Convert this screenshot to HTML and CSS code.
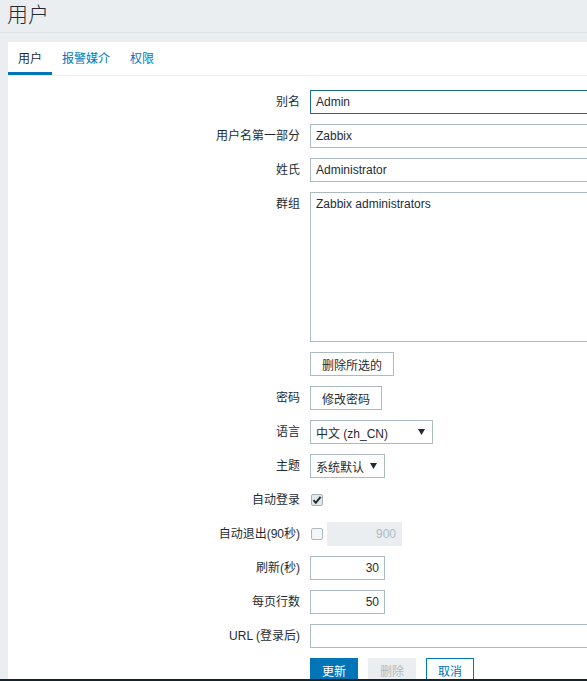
FILE: index.html
```html
<!DOCTYPE html>
<html lang="zh-CN">
<head>
<meta charset="utf-8">
<title>用户</title>
<link rel="stylesheet" href="styles.css">
</head>
<body>
<header class="page-header">
  <h1 class="page-title">用户</h1>
</header>

<main class="panel">
  <nav class="tabs">
    <a class="tab active">用户</a>
    <a class="tab">报警媒介</a>
    <a class="tab">权限</a>
  </nav>

  <form class="form">
    <div class="row">
      <label class="label">别名</label>
      <div class="field"><input class="input wide focused" type="text" value="Admin"></div>
    </div>
    <div class="row">
      <label class="label">用户名第一部分</label>
      <div class="field"><input class="input wide" type="text" value="Zabbix"></div>
    </div>
    <div class="row">
      <label class="label">姓氏</label>
      <div class="field"><input class="input wide" type="text" value="Administrator"></div>
    </div>
    <div class="row">
      <label class="label">群组</label>
      <div class="field">
        <div class="listbox">
          <div class="option">Zabbix administrators</div>
        </div>
      </div>
    </div>
    <div class="row">
      <span class="label"></span>
      <div class="field"><button type="button" class="btn alt">删除所选的</button></div>
    </div>
    <div class="row">
      <label class="label">密码</label>
      <div class="field"><button type="button" class="btn alt">修改密码</button></div>
    </div>
    <div class="row">
      <label class="label">语言</label>
      <div class="field">
        <div class="select lang"><span>中文 (zh_CN)</span><svg class="caret" width="7" height="6" viewBox="0 0 7 6"><path d="M0 0h7L3.5 6z" fill="#1f2c33"/></svg></div>
      </div>
    </div>
    <div class="row">
      <label class="label">主题</label>
      <div class="field">
        <div class="select theme"><span>系统默认</span><svg class="caret" width="7" height="6" viewBox="0 0 7 6"><path d="M0 0h7L3.5 6z" fill="#1f2c33"/></svg></div>
      </div>
    </div>
    <div class="row">
      <label class="label">自动登录</label>
      <div class="field">
        <span class="checkbox checked"><svg width="10" height="10" viewBox="0 0 10 10"><path d="M1.5 5.2l2.3 2.6L8.6 1.8" fill="none" stroke="#1f2c33" stroke-width="2"/></svg></span>
      </div>
    </div>
    <div class="row">
      <label class="label">自动退出(90秒)</label>
      <div class="field inline">
        <span class="checkbox"></span>
        <input class="input num" type="text" value="900" disabled>
      </div>
    </div>
    <div class="row">
      <label class="label">刷新(秒)</label>
      <div class="field"><input class="input num" type="text" value="30"></div>
    </div>
    <div class="row">
      <label class="label">每页行数</label>
      <div class="field"><input class="input num" type="text" value="50"></div>
    </div>
    <div class="row">
      <label class="label">URL (登录后)</label>
      <div class="field"><input class="input wide" type="text" value=""></div>
    </div>
    <div class="row">
      <span class="label"></span>
      <div class="field buttons">
        <button type="button" class="btn primary">更新</button>
        <button type="button" class="btn" disabled>删除</button>
        <button type="button" class="btn secondary">取消</button>
      </div>
    </div>
  </form>
</main>

<div class="footer-edge"></div>
</body>
</html>
```

FILE: styles.css
```css
* {
  box-sizing: border-box;
}

html, body {
  margin: 0;
  height: 100%;
  overflow: hidden;
}

body {
  background: #ebeef0;
  color: #1f2c33;
  font-family: "Liberation Sans", "Noto Sans CJK SC", Arial, sans-serif;
  font-size: 12px;
  display: flex;
  flex-direction: column;
}

.page-header {
  height: 33px;
  flex: none;
  border-bottom: 1px solid #dde2e5;
  padding: 0 7px;
}

.page-title {
  margin: 0;
  font-size: 21px;
  font-weight: 300;
  line-height: 28px;
  padding-top: 1px;
}

.panel {
  flex: 1;
  min-height: 0;
  margin: 9px 0 0 8px;
  background: #ffffff;
  overflow: hidden;
}

/* tab strip */
.tabs {
  display: flex;
  border-bottom: 1px solid #ebeef0;
}

.tab {
  padding: 10px 10px 6px;
  line-height: 14px;
  color: #0275b8;
  border-bottom: 3px solid transparent;
  cursor: pointer;
}

.tab.active {
  color: #1f2c33;
  border-bottom-color: #0275b8;
}

/* form table */
.form {
  padding-top: 9px;
  display: grid;
  grid-template-columns: 292px 1fr;
  column-gap: 10px;
}

.row {
  display: contents;
}

.label,
.field {
  padding: 5px 0;
}

.label {
  text-align: right;
  line-height: 24px;
  white-space: nowrap;
}

.field {
  display: flex;
  align-items: center;
  min-height: 34px;
}

.field.inline {
  gap: 4px;
}

.input {
  height: 24px;
  border: 1px solid #acbbc2;
  padding: 0 5px;
  font: inherit;
  color: #1f2c33;
  background: #ffffff;
  outline: none;
}

.input.wide {
  width: 453px;
  flex: none;
}

.input.focused {
  border-color: #1b6a93;
}

.input.num {
  width: 75px;
  text-align: right;
}

.input:disabled {
  background: #ebeef0;
  border-color: #ebeef0;
  color: #acbbc2;
}

.listbox {
  width: 453px;
  height: 150px;
  flex: none;
  border: 1px solid #acbbc2;
  padding: 4px 5px;
  line-height: 14px;
}

.select {
  height: 24px;
  border: 1px solid #acbbc2;
  padding: 0 7px 0 5px;
  display: flex;
  align-items: center;
  justify-content: space-between;
  background: #ffffff;
}

.select.lang {
  width: 123px;
}

.select.theme {
  width: 75px;
}

.caret {
  flex: none;
}

.checkbox {
  width: 12px;
  height: 12px;
  margin-left: 1px;
  border: 1px solid #acbbc2;
  border-radius: 2px;
  background: #f3f5f6;
  display: inline-flex;
  align-items: center;
  justify-content: center;
  flex: none;
}

.checkbox.checked {
  background: #e4e8ea;
  border-color: #a4b0b6;
}

.btn {
  height: 24px;
  padding: 0 11px;
  border: 1px solid #acbbc2;
  background: #ffffff;
  color: #1f2c33;
  font: inherit;
  cursor: pointer;
}

.btn.primary {
  background: #0275b8;
  border-color: #0275b8;
  color: #ffffff;
}

.btn.secondary {
  border-color: #0275b8;
  color: #0275b8;
}

.btn:disabled {
  background: #ebeef0;
  border-color: #ebeef0;
  color: #acbbc2;
  cursor: default;
}

.buttons {
  gap: 10px;
}

/* dark window edge along the bottom */
.footer-edge {
  position: fixed;
  left: 0;
  right: 0;
  bottom: 0;
  height: 2px;
  background: #16232b;
}
```
